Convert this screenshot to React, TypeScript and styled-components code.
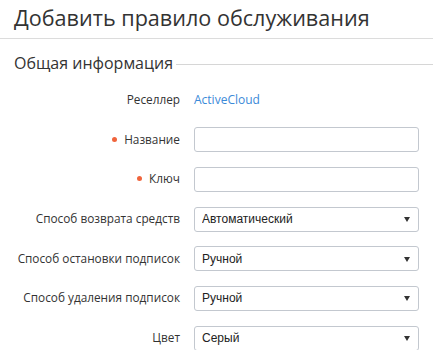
import React from 'react';
import styled, { createGlobalStyle } from 'styled-components';

const GlobalStyle = createGlobalStyle`
  body {
    margin: 0;
    background: #fff;
    font-family: 'Open Sans', Arial, sans-serif;
    color: #333;
  }
`;

const Page = styled.div`
  width: 433px;
`;

const TitleBar = styled.div`
  height: 39px;
  border-bottom: 1px solid #dcdcdc;
  padding-left: 14px;
  box-sizing: border-box;
`;

const Title = styled.h1`
  margin: 0;
  font-size: 21.6px;
  font-weight: 400;
  line-height: 35px;
  color: #333;
`;

const Legend = styled.div`
  display: flex;
  align-items: center;
  gap: 3px;
  padding-left: 14px;
  margin-top: 12px;
  height: 24px;
  font-size: 16px;
  color: #333;

  &::after {
    content: '';
    flex: 1;
    height: 1px;
    background: #d6d6d6;
    margin-top: 2px;
  }
`;

const Form = styled.div`
  display: grid;
  grid-template-columns: 180px 225px;
  grid-auto-rows: 25px;
  column-gap: 14px;
  row-gap: 14.7px;
  margin-top: 12px;
  align-items: center;
`;

const Label = styled.label<{ $required?: boolean }>`
  display: flex;
  justify-content: flex-end;
  align-items: center;
  gap: 7px;
  font-size: 11.8px;
  line-height: 25px;
  white-space: nowrap;

  &::before {
    content: '';
    display: ${(p) => (p.$required ? 'block' : 'none')};
    width: 5px;
    height: 5px;
    border-radius: 50%;
    background: #f0643c;
  }
`;

const Value = styled.a`
  font-size: 12px;
  line-height: 25px;
  color: #3b8ad8;
  text-decoration: none;
`;

const Input = styled.input`
  box-sizing: border-box;
  width: 225px;
  height: 25px;
  margin-top: 1px;
  border: 1px solid #c3c8cf;
  border-radius: 3px;
  padding: 0 7px;
  font: 12px 'Liberation Sans', Arial, sans-serif;
`;

const SelectWrap = styled.div`
  position: relative;
  width: 225px;
  height: 25px;
`;

const Select = styled.select`
  box-sizing: border-box;
  width: 100%;
  height: 25px;
  appearance: none;
  background: #fff;
  border: 1px solid #c3c8cf;
  border-radius: 3px;
  padding: 0 7px;
  font: 12px 'Liberation Sans', Arial, sans-serif;
  color: #222;
`;

const Caret = styled.span`
  position: absolute;
  right: 9px;
  top: 11px;
  width: 0;
  height: 0;
  border-left: 3px solid transparent;
  border-right: 3px solid transparent;
  border-top: 5px solid #333;
  pointer-events: none;
`;

const Dropdown = ({ value }: { value: string }) => (
  <SelectWrap>
    <Select defaultValue={value}>
      <option>{value}</option>
    </Select>
    <Caret />
  </SelectWrap>
);

const App: React.FC = () => {
  return (
    <Page>
      <GlobalStyle />
      <TitleBar>
        <Title>Добавить правило обслуживания</Title>
      </TitleBar>
      <Legend>Общая информация</Legend>
      <Form>
        <Label>Реселлер</Label>
        <Value href="#">ActiveCloud</Value>

        <Label $required>Название</Label>
        <Input />

        <Label $required>Ключ</Label>
        <Input />

        <Label>Способ возврата средств</Label>
        <Dropdown value="Автоматический" />

        <Label>Способ остановки подписок</Label>
        <Dropdown value="Ручной" />

        <Label>Способ удаления подписок</Label>
        <Dropdown value="Ручной" />

        <Label>Цвет</Label>
        <Dropdown value="Серый" />
      </Form>
    </Page>
  );
};

export default App;
